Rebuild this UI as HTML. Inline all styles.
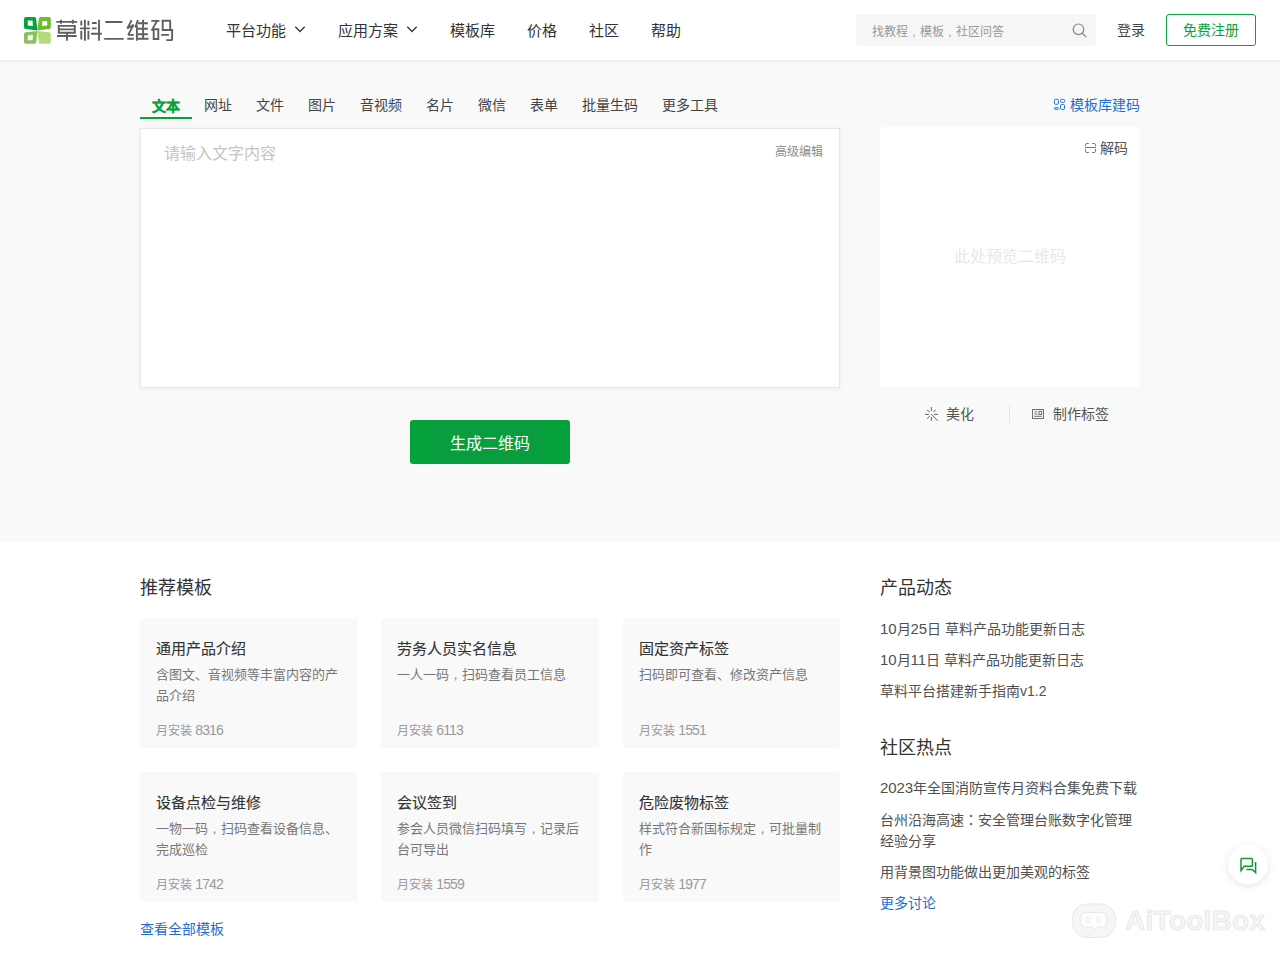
<!DOCTYPE html>
<html lang="zh-CN">
<head>
<meta charset="utf-8">
<style>
*{margin:0;padding:0;box-sizing:border-box;}
html,body{width:1280px;height:960px;overflow:hidden;background:#fff;}
body{font-family:"Liberation Sans",sans-serif;color:#333;position:relative;}
.a{position:absolute;white-space:nowrap;}
#hdr{position:absolute;left:0;top:0;width:1280px;height:60px;background:#fff;box-shadow:0 1px 3px rgba(0,0,0,0.07);z-index:2;}
#top{position:absolute;left:0;top:60px;width:1280px;height:482px;background:#f9f9f9;}
.card{position:absolute;width:217px;height:130px;background:#f9f9f9;border-radius:2px;}
.card .t{position:absolute;left:16px;top:23px;font-size:15px;line-height:15px;color:#333;white-space:nowrap;-webkit-text-stroke:0.25px #333;}
.card .d{position:absolute;left:16px;top:46px;font-size:13px;line-height:21px;color:#777;white-space:nowrap;}
.card .n{position:absolute;left:16px;top:723px;font-size:12px;line-height:12px;color:#999;white-space:nowrap;}
.li{left:880px;font-size:14px;line-height:14px;color:#505050;}
.blue{color:#1d6fcf;}
.dg{font-size:15px;letter-spacing:-0.1px;}
.n13{font-size:14px;letter-spacing:-0.9px;}
.cm{display:inline-block;width:1em;text-align:center;}
</style>
</head>
<body>
<div id="hdr">
  <svg class="a" style="left:24px;top:17px" width="27" height="27" viewBox="0 0 27 27">
    <path d="M2 0 H10.3 Q11.9 0 12.1 1.6 L13.5 13.5 L1.7 12.1 Q0 11.9 0 10.2 V2 Q0 0 2 0 Z M3.8 3.6 L8.6 3.6 L8.9 8.9 L3.8 8.4 Z" fill="#05a339" fill-rule="evenodd"/>
    <path d="M16.8 0 H24.8 Q26.8 0 26.8 2 V10.2 Q26.8 11.9 25.1 12.1 L13.5 13.5 L14.9 1.6 Q15.1 0 16.8 0 Z M18.4 3.9 L23.2 3.9 L23.2 8.4 L18.1 8.9 Z" fill="#6bbd2b" fill-rule="evenodd"/>
    <path d="M1.7 15.2 L13.5 14.0 L12.2 25.2 Q12 26.8 10.3 26.8 H2 Q0 26.8 0 24.8 V17 Q0 15.4 1.7 15.2 Z M3.8 18.4 L8.9 17.9 L8.6 23.2 L3.8 23.2 Z" fill="#86c35a" fill-rule="evenodd"/>
    <path d="M13.5 14.0 L25.1 15.2 Q26.8 15.4 26.8 17 V24.8 Q26.8 26.8 24.8 26.8 H16.7 Q15 26.8 14.8 25.2 Z" fill="#b4db7b"/>
  </svg>
  <svg class="a" style="left:0;top:0" width="180" height="60" viewBox="0 0 180 60" fill="none" stroke="#606060" stroke-width="1.9" stroke-linecap="butt" stroke-linejoin="bevel">
    <path d="M56.3 21.9 H77.2 M61 19.7 V23.8 M72.8 19.7 V23.8 M58.8 24.9 V33.6 M74.8 24.9 V33.6 M57.8 25.85 H75.8 M58.8 29.4 H74.8 M57.8 32.7 H75.8 M57 36 H76.7 M67 33.6 V40.7"/>
    <path d="M84.9 19.8 V40.7 M81.3 20.7 V25.4 M88.4 20.7 V25.4 M80 28.4 H89.9 M81.3 30.8 V39.4 M88.4 30.8 V39.4 M92 23 H96.7 M92 28.4 H96.7 M91 33.8 H101.8 M99 19.8 V40.7"/>
    <path d="M105.3 22 H122.4 M104.2 38.9 H123.7"/>
    <path d="M131.6 20.2 L127.3 28.4 L133.6 24.9 L128.2 34.9 H133.8 M127.3 38.8 H133.8 M137.9 20 L135.3 27.5 M136.9 25.3 V40.7 M143.1 19.8 V38.8 M138 23.3 H147.9 M138 28.8 H147.9 M138 34.2 H147.9 M138 38.8 H148.6"/>
    <path d="M151.3 20.9 H159.5 M156.8 21.2 L151.6 30.6 M153.7 28.5 V39.9 M158.3 28.5 V39.9 M152.7 29.3 H159.3 M152.7 39 H159.3 M161.5 20.8 H170.9 M162.7 20.8 V30 M170.2 20.8 V30 M161.7 30 H173.1 M172.1 29 V40.1 H166.3 M161.2 34.9 H169"/>
  </svg>
  
  <div id="nav1" class="a" style="left:226px;top:23px;font-size:15px;line-height:15px;color:#333">平台功能</div>
  <svg class="a" style="left:294px;top:26px" width="12" height="7" viewBox="0 0 12 7"><path d="M1.3 0.8 L6 5.5 L10.7 0.8" stroke="#333" stroke-width="1.3" fill="none"/></svg>
  <div id="nav2" class="a" style="left:338px;top:23px;font-size:15px;line-height:15px;color:#333">应用方案</div>
  <svg class="a" style="left:406px;top:26px" width="12" height="7" viewBox="0 0 12 7"><path d="M1.3 0.8 L6 5.5 L10.7 0.8" stroke="#333" stroke-width="1.3" fill="none"/></svg>
  <div id="nav3" class="a" style="left:450px;top:23px;font-size:15px;line-height:15px;color:#333">模板库</div>
  <div id="nav4" class="a" style="left:527px;top:23px;font-size:15px;line-height:15px;color:#333">价格</div>
  <div id="nav5" class="a" style="left:588.5px;top:23px;font-size:15px;line-height:15px;color:#333">社区</div>
  <div id="nav6" class="a" style="left:651px;top:23px;font-size:15px;line-height:15px;color:#333">帮助</div>
  <div class="a" style="left:856px;top:14px;width:240px;height:32px;background:#f6f6f6;border-radius:2px;"></div>
  <div id="srch" class="a" style="left:872px;top:26px;font-size:12px;line-height:12px;color:#999">找教程<span class="cm">,</span>模板<span class="cm">,</span>社区问答</div>
  <svg class="a" style="left:1071.5px;top:23px" width="16" height="15" viewBox="0 0 16 15"><circle cx="6.5" cy="6.3" r="5.3" stroke="#888" stroke-width="1.2" fill="none"/><path d="M10.3 10.2 L14.3 14.1" stroke="#888" stroke-width="1.3"/></svg>
  <div id="login" class="a" style="left:1117px;top:23px;font-size:14px;line-height:14px;color:#444">登录</div>
  <div class="a" style="left:1166px;top:14px;width:90px;height:32px;border:1px solid #0aa13e;border-radius:3px;"></div>
  <div id="reg" class="a" style="left:1183px;top:23px;font-size:14px;line-height:14px;color:#0aa13e">免费注册</div>
</div>

<div id="top"></div>
<div id="tab0" class="a" style="left:152px;top:98.5px;font-size:14px;line-height:14px;color:#0aa13c;font-weight:bold;-webkit-text-stroke:0.25px #0aa13c">文本</div>
<div class="a" style="left:140px;top:116.5px;width:52px;height:2.5px;background:#08a03b"></div>
<div id="tab1" class="a" style="left:204px;top:98px;font-size:14px;line-height:14px;color:#444">网址</div>
<div class="a" style="left:256px;top:98px;font-size:14px;line-height:14px;color:#444">文件</div>
<div class="a" style="left:308px;top:98px;font-size:14px;line-height:14px;color:#444">图片</div>
<div class="a" style="left:360px;top:98px;font-size:14px;line-height:14px;color:#444">音视频</div>
<div class="a" style="left:426px;top:98px;font-size:14px;line-height:14px;color:#444">名片</div>
<div class="a" style="left:478px;top:98px;font-size:14px;line-height:14px;color:#444">微信</div>
<div class="a" style="left:530px;top:98px;font-size:14px;line-height:14px;color:#444">表单</div>
<div class="a" style="left:582px;top:98px;font-size:14px;line-height:14px;color:#444">批量生码</div>
<div id="tab9" class="a" style="left:662px;top:98px;font-size:14px;line-height:14px;color:#444">更多工具</div>
<svg class="a" style="left:1053px;top:98px" width="13" height="13" viewBox="0 0 13 13" fill="none" stroke="#1f6fce" stroke-width="1"><rect x="1.46" y="1.4" width="3.94" height="4.9" rx="1"/><rect x="1.46" y="9.6" width="3.94" height="1.8" rx="0.6"/><rect x="7.5" y="1.4" width="4.1" height="3.0" rx="1"/><rect x="7.5" y="6.6" width="4.1" height="4.8" rx="1"/></svg>
<div id="tplink" class="a blue" style="left:1070px;top:98px;font-size:14px;line-height:14px;">模板库建码</div>

<div class="a" style="left:140px;top:128px;width:700px;height:260px;background:#fff;border:1px solid #e6e6e6;box-shadow:0 1px 5px rgba(0,0,0,0.05);"></div>
<div id="ph" class="a" style="left:164px;top:146px;font-size:16px;line-height:16px;color:#c4c4c4">请输入文字内容</div>
<div id="adv" class="a" style="left:775px;top:146px;font-size:12px;line-height:12px;color:#8c8c8c">高级编辑</div>
<div class="a" style="left:880px;top:127px;width:260px;height:260px;background:#fff;border-radius:3px;"></div>
<svg class="a" style="left:1084px;top:142px" width="13" height="12" viewBox="1084 142 13 12" fill="none" stroke="#777" stroke-width="1"><path d="M1088.8 143.5 H1086.8 Q1085.5 143.5 1085.5 144.8 V146.2"/><path d="M1092.2 143.5 H1094.2 Q1095.5 143.5 1095.5 144.8 V146.2"/><path d="M1085 147.5 H1096"/><path d="M1085.5 148.9 V151.2 Q1085.5 152.5 1086.8 152.5 H1088.8"/><path d="M1095.5 148.9 V151.2 Q1095.5 152.5 1094.2 152.5 H1092"/></svg>
<div id="decode" class="a" style="left:1100px;top:141px;font-size:14px;line-height:14px;color:#555">解码</div>
<div id="prev" class="a" style="left:954px;top:249px;font-size:16px;line-height:16px;color:#e8e8e8">此处预览二维码</div>
<svg class="a" style="left:920px;top:402px" width="24" height="24" viewBox="920 402 24 24" fill="none" stroke="#6a6a6a" stroke-width="1" stroke-linecap="round"><path d="M931.4 407.4 V410.6 M931.4 417.4 V420.4 M925.4 414.4 H928.6 M934.4 414.4 H937.6 M927.4 410.3 L929.4 411.6 M935.5 410.2 L933.6 411.6 M927.4 418.5 L929.5 416.3 M931.3 414.3 L937.5 420.4"/></svg>
<div id="beaut" class="a" style="left:946px;top:407px;font-size:14px;line-height:14px;color:#555">美化</div>
<div class="a" style="left:1009px;top:405.5px;width:1px;height:17px;background:#e3e3e3"></div>
<svg class="a" style="left:1032px;top:409px" width="12" height="10" viewBox="0 0 12 10" stroke="#707070" stroke-width="1" fill="none"><rect x="0.5" y="0.5" width="11" height="9"/><path d="M2.5 2.9 H5.2 M2.5 5 H5.5 M2.2 7.3 H9.8"/><rect x="7" y="2.3" width="2.6" height="3.2"/></svg>
<div id="label" class="a" style="left:1053px;top:407px;font-size:14px;line-height:14px;color:#555">制作标签</div>
<div class="a" style="left:410px;top:420px;width:160px;height:44px;background:linear-gradient(to right,#05a13a 0,#05a13a 24px,#0a9d3e 24px,#0a9d3e 134px,#05a13a 134px);border-radius:3px;"></div>
<div id="gen" class="a" style="left:450px;top:436px;font-size:16px;line-height:16px;color:#fff">生成二维码</div>

<div id="h1" class="a" style="left:140px;top:578.5px;font-size:18px;line-height:18px;color:#333">推荐模板</div>

<div class="card" style="left:140px;top:618px"></div>
<div class="card" style="left:381px;top:618px;width:218px"></div>
<div class="card" style="left:623px;top:618px"></div>
<div class="card" style="left:140px;top:772px"></div>
<div class="card" style="left:381px;top:772px;width:218px"></div>
<div class="card" style="left:623px;top:772px"></div>

<div id="ct1" class="a ct" style="left:156px;top:641px;font-size:15px;line-height:15px;color:#333;-webkit-text-stroke:0.12px #333">通用产品介绍</div>
<div id="cd1" class="a" style="left:156px;top:664px;font-size:13px;line-height:21px;color:#777">含图文、音视频等丰富内容的产<br>品介绍</div>
<div id="cn1" class="a" style="left:156px;top:723.5px;font-size:12px;line-height:12px;color:#999">月安装 <span class="n13">8316</span></div>

<div class="a" style="left:397px;top:641px;font-size:15px;line-height:15px;color:#333;-webkit-text-stroke:0.12px #333">劳务人员实名信息</div>
<div class="a" style="left:397px;top:664px;font-size:13px;line-height:21px;color:#777">一人一码<span class="cm">,</span>扫码查看员工信息</div>
<div class="a" style="left:397px;top:723.5px;font-size:12px;line-height:12px;color:#999">月安装 <span class="n13">6113</span></div>

<div class="a" style="left:639px;top:641px;font-size:15px;line-height:15px;color:#333;-webkit-text-stroke:0.12px #333">固定资产标签</div>
<div class="a" style="left:639px;top:664px;font-size:13px;line-height:21px;color:#777">扫码即可查看、修改资产信息</div>
<div class="a" style="left:639px;top:723.5px;font-size:12px;line-height:12px;color:#999">月安装 <span class="n13">1551</span></div>

<div class="a" style="left:156px;top:795px;font-size:15px;line-height:15px;color:#333;-webkit-text-stroke:0.12px #333">设备点检与维修</div>
<div class="a" style="left:156px;top:818px;font-size:13px;line-height:21px;color:#777">一物一码<span class="cm">,</span>扫码查看设备信息、<br>完成巡检</div>
<div class="a" style="left:156px;top:877.5px;font-size:12px;line-height:12px;color:#999">月安装 <span class="n13">1742</span></div>

<div class="a" style="left:397px;top:795px;font-size:15px;line-height:15px;color:#333;-webkit-text-stroke:0.12px #333">会议签到</div>
<div class="a" style="left:397px;top:818px;font-size:13px;line-height:21px;color:#777">参会人员微信扫码填写<span class="cm">,</span>记录后<br>台可导出</div>
<div class="a" style="left:397px;top:877.5px;font-size:12px;line-height:12px;color:#999">月安装 <span class="n13">1559</span></div>

<div class="a" style="left:639px;top:795px;font-size:15px;line-height:15px;color:#333;-webkit-text-stroke:0.12px #333">危险废物标签</div>
<div class="a" style="left:639px;top:818px;font-size:13px;line-height:21px;color:#777">样式符合新国标规定<span class="cm">,</span>可批量制<br>作</div>
<div class="a" style="left:639px;top:877.5px;font-size:12px;line-height:12px;color:#999">月安装 <span class="n13">1977</span></div>

<div id="more1" class="a blue" style="left:140px;top:922px;font-size:14px;line-height:14px">查看全部模板</div>

<div id="h2" class="a" style="left:880px;top:579px;font-size:18px;line-height:18px;color:#333">产品动态</div>
<div id="l1" class="a li" style="top:622px"><span class="dg">10</span>月<span class="dg">25</span>日 草料产品功能更新日志</div>
<div id="l2" class="a li" style="top:653px"><span class="dg">10</span>月<span class="dg">11</span>日 草料产品功能更新日志</div>
<div id="l3" class="a li" style="top:684px">草料平台搭建新手指南v1.2</div>
<div id="h3" class="a" style="left:880px;top:738.5px;font-size:18px;line-height:18px;color:#333">社区热点</div>
<div id="l4" class="a li" style="top:781px"><span class="dg">2023</span>年全国消防宣传月资料合集免费下载</div>
<div id="l5" class="a li" style="top:809.5px;line-height:21px">台州沿海高速<span lang="zh-TW">：</span>安全管理台账数字化管理<br>经验分享</div>
<div id="l6" class="a li" style="top:864.5px">用背景图功能做出更加美观的标签</div>
<div id="more2" class="a blue" style="left:880px;top:896px;font-size:14px;line-height:14px">更多讨论</div>

<div class="a" style="left:1228px;top:844px;width:40px;height:40px;border-radius:50%;background:#fff;box-shadow:0 2px 8px rgba(0,0,0,0.10);"></div>
<svg class="a" style="left:1239px;top:856px" width="19" height="19" viewBox="0 0 19 19" fill="none" stroke="#13953a" stroke-width="1.5"><path d="M2 14.5 V3.2 Q2 2.4 2.8 2.4 H12.6 Q13.4 2.4 13.4 3.2 V9.4 Q13.4 10.2 12.6 10.2 H5.2 Z"/><path d="M7.4 13.4 H13.2 L16.6 16.6 V6"/></svg>

<svg class="a" style="left:1070px;top:902px" width="48" height="38" viewBox="0 0 48 38">
  <rect x="2.3" y="1.9" width="43.3" height="33.6" rx="15" fill="#f6f6f6" stroke="#e2e2e2" stroke-width="0.8"/>
  <path d="M17 10.5 H31 Q37 10.5 37 17.5 Q37 25.3 31 25.3 H27 L24.5 28.5 L23 25.3 H17 Q10 25.3 10 17.5 Q10 10.5 17 10.5 Z" fill="#fdfdfd" stroke="#e4e4e4" stroke-width="0.8"/>
  <rect x="16.3" y="15" width="4" height="5.5" rx="1.5" fill="none" stroke="#e6e6e6" stroke-width="0.7"/>
  <rect x="26.5" y="15" width="4" height="5.5" rx="1.5" fill="none" stroke="#e6e6e6" stroke-width="0.7"/>
</svg>
<div class="a" style="left:1125px;top:907px;font-size:28px;line-height:28px;font-weight:bold;color:#f6f6f6;-webkit-text-stroke:0.7px #e3e3e3;letter-spacing:0.25px">AiToolBox</div>

</body>
</html>
